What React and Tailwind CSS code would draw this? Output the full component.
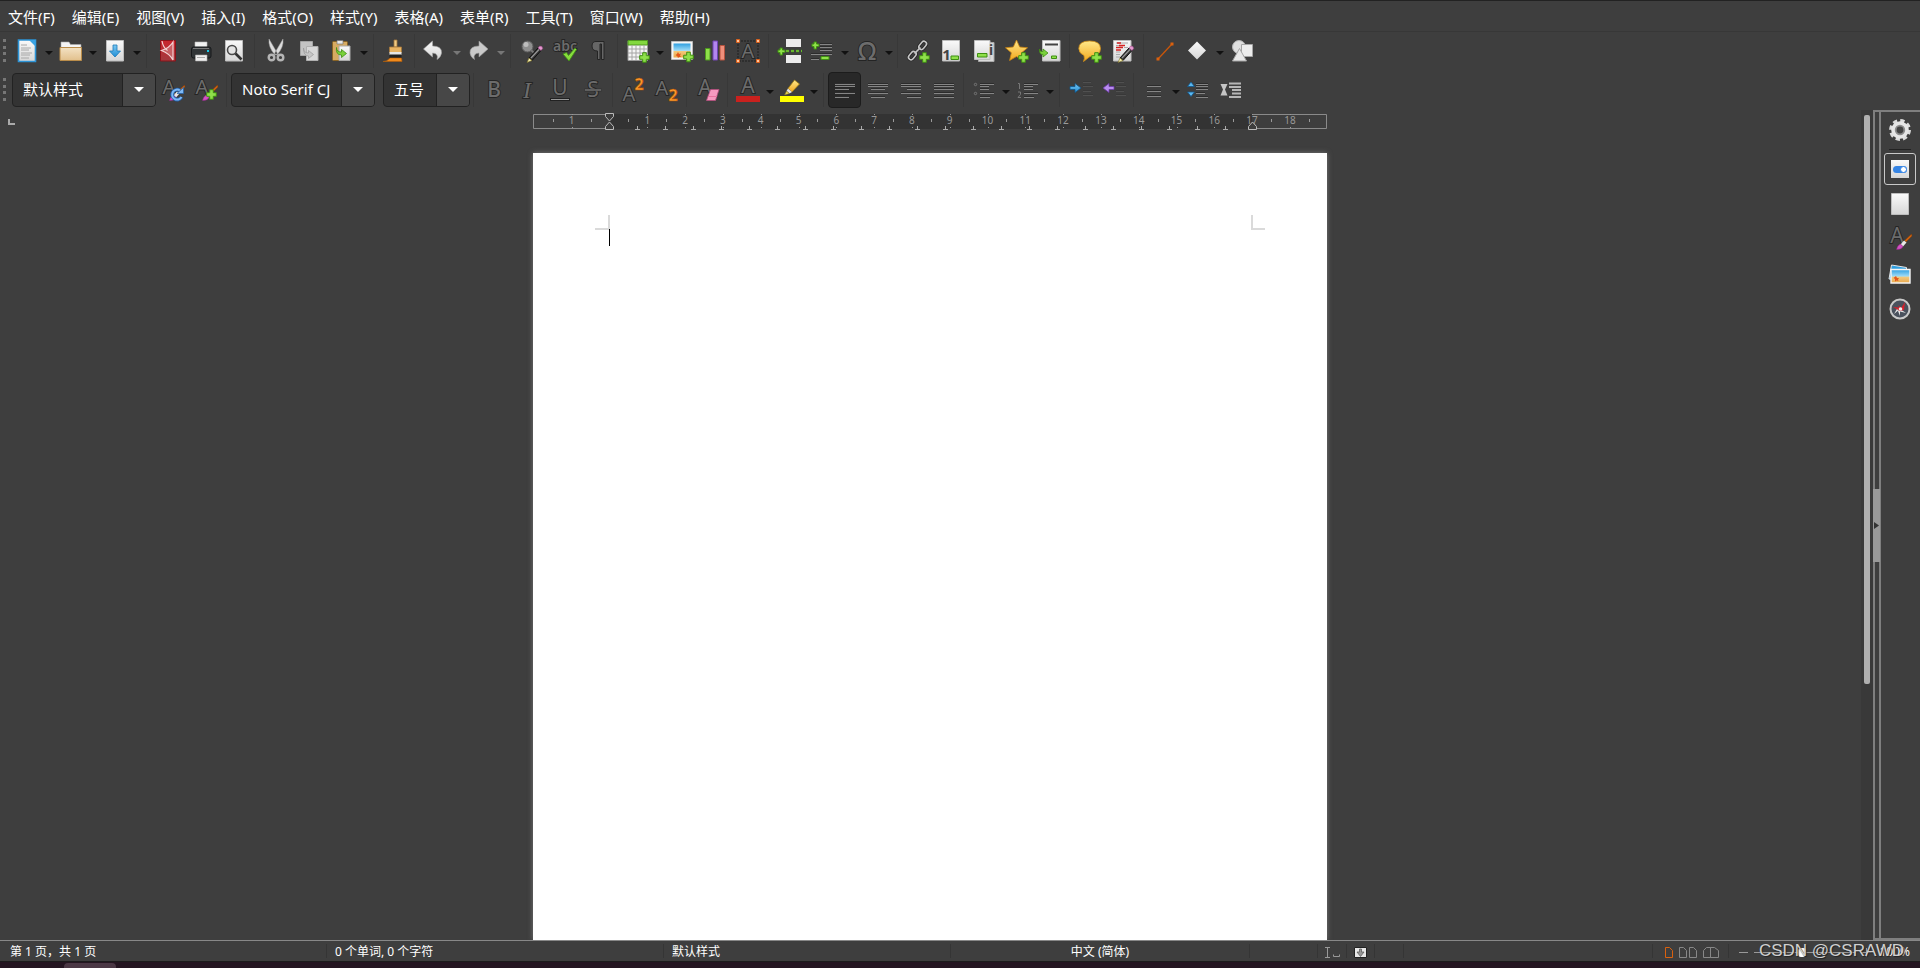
import React, { useState } from 'react';

const menus = ['文件(F)', '编辑(E)', '视图(V)', '插入(I)', '格式(O)', '样式(Y)', '表格(A)', '表单(R)', '工具(T)', '窗口(W)', '帮助(H)'];

// Gradients shared by all the icons
const Gradients = () => (
  <svg className="absolute h-0 w-0" aria-hidden="true">
    <defs>
      <linearGradient id="paper" x1="0" y1="0" x2="0" y2="1">
        <stop offset="0" stopColor="#fafafa" />
        <stop offset="1" stopColor="#d6d6d6" />
      </linearGradient>
      <linearGradient id="folder" x1="0" y1="0" x2="0" y2="1">
        <stop offset="0" stopColor="#f3e2c4" />
        <stop offset="1" stopColor="#e2c08c" />
      </linearGradient>
      <linearGradient id="blue" x1="0" y1="0" x2="0" y2="1">
        <stop offset="0" stopColor="#7cc8f2" />
        <stop offset="1" stopColor="#1f8ed6" />
      </linearGradient>
      <linearGradient id="gold" x1="0" y1="0" x2="0" y2="1">
        <stop offset="0" stopColor="#ffe88a" />
        <stop offset="1" stopColor="#f2a81d" />
      </linearGradient>
      <linearGradient id="red" x1="0" y1="0" x2="0" y2="1">
        <stop offset="0" stopColor="#c9252d" />
        <stop offset="1" stopColor="#a33a3e" />
      </linearGradient>
      <linearGradient id="sky" x1="0" y1="0" x2="0" y2="1">
        <stop offset="0" stopColor="#2f9fe0" />
        <stop offset="0.5" stopColor="#9fdcf7" />
        <stop offset="0.55" stopColor="#f3c97c" />
        <stop offset="1" stopColor="#e9a94e" />
      </linearGradient>
    </defs>
  </svg>
);

const Svg = ({ children }) => (
  <svg viewBox="0 0 24 24" className="h-6 w-6 overflow-visible" aria-hidden="true">
    {children}
  </svg>
);

const Plus = ({ x = 13, y = 12 }) => (
  <path
    transform={`translate(${x} ${y})`}
    d="M3.7 .7h3.6v3h3v3.6h-3v3H3.7v-3h-3V3.7h3z"
    fill="#8fe04a"
    stroke="#3f8f12"
    strokeWidth="1"
  />
);

const Letter = ({ children, x = 12, y = 20, size = 23, weight = 400, italic = false }) => (
  <text
    x={x}
    y={y}
    fontSize={size}
    fontWeight={weight}
    textAnchor="middle"
    fontStyle={italic ? 'italic' : 'normal'}
    fontFamily={italic ? 'Liberation Serif, serif' : 'Noto Sans, sans-serif'}
    fill="#6c6c6c"
    stroke="#242424"
    strokeWidth="1.8"
    paintOrder="stroke"
  >
    {children}
  </text>
);

const Lines = ({ rows, color = '#858585', shade = '#2c2c2c' }) => (
  <g>
    {rows.map(([x, y, w]) => (
      <g key={y}>
        <rect x={x} y={y - 1} width={w} height="1" fill={shade} />
        <rect x={x} y={y} width={w} height="1" fill={color} />
      </g>
    ))}
  </g>
);

const Pencil = () => (
  <g>
    <path d="M9 19l9-10 3 2.500-9 10z" fill="#333" stroke="#111" strokeWidth="1" />
    <path d="M11 19l8-8.500" stroke="#999" strokeWidth="1.200" />
    <path d="M18 9l1.500-1.800q3-.5 3.200 2.300L21 11.500z" fill="#e59ad0" stroke="#a14d8c" strokeWidth=".6" />
    <path d="M9 19l3 2.500-5 2z" fill="#f7efaf" stroke="#776b22" strokeWidth=".6" />
  </g>
);

const Brush = () => (
  <g>
    <path d="M23.500 7l-7 6.500 1.500 1.500 6-6z" fill="#d0620f" stroke="#7a3705" strokeWidth=".4" />
    <path d="M16 13.500l-3.500 4 2.500 2 3.500-4z" fill="#e8e8e8" />
    <path d="M12.500 17q-3 1-4 5.500 5 .5 6.500-3z" fill="#d352c4" stroke="#8d2383" strokeWidth=".5" />
  </g>
);

const icons = {
  new: (
    <Svg>
      <path d="M3.500 1h17v21.500h-17z" fill="url(#paper)" stroke="#2d94d6" strokeWidth="1.600" />
      <path d="M14 1h6.500v6.500z" fill="#3aa3e3" />
      <path d="M6 6h6M6 9h10M6 11h8M6 14h11M6 16h9M6 19h8" stroke="#a8a8a8" strokeWidth="1" />
    </Svg>
  ),
  open: (
    <Svg>
      <path d="M2 3h8l1.500 2.500H22V12H2z" fill="#f5f5f5" stroke="#aaa" strokeWidth=".6" />
      <path d="M1 8.500h21.500V21.500H1z" fill="url(#folder)" stroke="#b98c4a" strokeWidth="1" />
    </Svg>
  ),
  save: (
    <Svg>
      <path d="M3.500 1.500h17v20.500h-17z" fill="url(#paper)" stroke="#bdbdbd" />
      <path d="M10 6h4v6h3.500L12 18l-5.500-6H10z" fill="url(#blue)" stroke="#1c78b8" strokeWidth=".8" />
    </Svg>
  ),
  pdf: (
    <Svg>
      <path d="M4.500 1.500h15v20.500h-15z" fill="url(#red)" stroke="#8c1219" />
      <path d="M17 3v18Q13.500 14.500 5.500 11.500 13.500 9 17 3z" fill="#d98a8d" fillOpacity=".55" stroke="#f3d3d4" strokeWidth="1.200" />
      <path d="M6 2q1 6.500 5.500 9.500" fill="none" stroke="#f3d3d4" strokeWidth="1.200" />
    </Svg>
  ),
  print: (
    <Svg>
      <path d="M6 3h12v6H6z" fill="#f2f2f2" stroke="#bbb" strokeWidth=".6" />
      <rect x="2.500" y="8" width="19.500" height="11" rx="2" fill="#303436" stroke="#16181a" />
      <path d="M4 9.500h16" stroke="#777" />
      <rect x="18" y="11" width="2" height="2" fill="#19c8e8" />
      <path d="M6.500 16h11.500v6H6.500z" fill="#eee" stroke="#aaa" strokeWidth=".6" />
      <path d="M8 18.500h8" stroke="#aaa" />
    </Svg>
  ),
  preview: (
    <Svg>
      <path d="M3.500 1.500h17v20.500h-17z" fill="url(#paper)" stroke="#bdbdbd" />
      <circle cx="10" cy="11" r="4.500" fill="#e4e4e4" stroke="#4a4a4a" strokeWidth="1.600" />
      <path d="M13.500 14.500l6 6" stroke="#333" strokeWidth="2.600" />
    </Svg>
  ),
  cut: (
    <Svg>
      <path d="M5 0l8.500 14.500-2.500 1.500Q4 8 5 0zM19 0l-8.500 14.500 2.500 1.500Q20 8 19 0z" fill="#dcdcdc" stroke="#a5a5a5" strokeWidth=".5" />
      <circle cx="7.500" cy="18.500" r="2.800" fill="none" stroke="#b5b5b5" strokeWidth="2.400" />
      <circle cx="16.500" cy="18.500" r="2.800" fill="none" stroke="#b5b5b5" strokeWidth="2.400" />
    </Svg>
  ),
  copy: (
    <Svg>
      <path d="M3.500 2.500h12v14h-12z" fill="#c4c4c4" stroke="#a5a5a5" />
      <path d="M9.500 7.500h11.500v14H9.500z" fill="#d8d8d8" stroke="#b0b0b0" />
      <path d="M6.500 9q0 5 5 5v-2.500l5 4-5 4V17q-5 0-5-8z" fill="#c6c6c6" stroke="#999" strokeWidth=".7" />
    </Svg>
  ),
  paste: (
    <Svg>
      <rect x="2.500" y="2.500" width="15" height="19" rx="1" fill="#d7ab62" stroke="#8a6424" />
      <path d="M7 1.500h6V5H7z" fill="#e8e8e8" stroke="#777" strokeWidth=".7" />
      <path d="M9 7h11v14.500H9z" fill="url(#paper)" stroke="#aaa" />
      <path d="M6.500 8.500q0 4.500 5 4.500v-2.500l5 4-5 4V16q-6 0-5-7.500z" fill="#7ad13b" stroke="#3f8f12" strokeWidth=".8" />
    </Svg>
  ),
  clone: (
    <Svg>
      <path d="M11 1h3v7h-3z" fill="#f0cb84" stroke="#a4763a" strokeWidth=".8" />
      <path d="M6.500 8h12v5.500h-12z" fill="#e9b463" stroke="#a4763a" strokeWidth=".8" />
      <path d="M6.500 13h12v3h-12z" fill="#e6e6e6" />
      <path d="M6.500 15.500h12V20h-12z" fill="#222" />
      <path d="M7 19l11.500 0 .5 3.500H0q4 0 7-3.500z" fill="#f08a1c" stroke="#b25c08" strokeWidth=".6" />
    </Svg>
  ),
  undo: (
    <Svg>
      <path d="M9.500 2v5q9.500 0 9 7-.5 4-4.500 6.500 2-6-4.500-6.500v4L.5 10z" fill="url(#paper)" stroke="#aaa" strokeWidth=".6" />
    </Svg>
  ),
  redo: (
    <Svg>
      <path d="M12 2v5q-9.500 0-9 7 .5 4 4.500 6.500-2-6 4.500-6.500v4l9-8z" fill="#c9c9c9" stroke="#999" strokeWidth=".6" />
    </Svg>
  ),
  find: (
    <Svg>
      <circle cx="7.500" cy="7.500" r="5.500" fill="#8f8f8f" stroke="#5d5d5d" />
      <circle cx="6" cy="5.500" r="2.500" fill="#bdbdbd" />
      <path d="M11 11l4 4" stroke="#777" strokeWidth="2" />
      <Pencil />
    </Svg>
  ),
  spell: (
    <Svg>
      <Letter size={14} y={12} weight={600}>abc</Letter>
      <path d="M10 15l3.500-1.500 2 3L22 9l1.500 1.500L16 22z" fill="#86dc3d" stroke="#3f8f12" strokeWidth=".8" />
    </Svg>
  ),
  pilcrow: (
    <Svg>
      <path d="M18 2.500v18h-2.500V5h-1.500V20.500h-2.500v-8.500Q6 12 6 7T11 2.500z" fill="#666" stroke="#242424" strokeWidth="1" />
    </Svg>
  ),
  table: (
    <Svg>
      <path d="M2 2h19.500v19.500H2z" fill="#f5f5f5" stroke="#999" />
      <path d="M2 1.500h19.500V6H2z" fill="#83d83f" stroke="#4f9a1e" />
      <path d="M2 10h19.500M2 14h19.500M2 18h19.500M6 6v15M10 6v15M14 6v15M18 6v15" stroke="#a5a5a5" />
      <Plus x={13} y={13} />
    </Svg>
  ),
  image: (
    <Svg>
      <path d="M1.500 2.500h21v18h-21z" fill="#f5f5f5" stroke="#bbb" />
      <path d="M3.500 4.500h17v14h-17z" fill="url(#sky)" />
      <path d="M8 13l1 2 2-.5-1 2 1 1.500H9l-1 1-.5-1.500L5.500 16l1.500-1z" fill="#e2561a" />
      <Plus x={13} y={12.5} />
    </Svg>
  ),
  chart: (
    <Svg>
      <path d="M2.500 9.500h4.500V21H2.500z" fill="#8fe04a" stroke="#4f9a1e" />
      <path d="M10 2h4.500V21H10z" fill="#b287ee" stroke="#7244b5" />
      <path d="M17 6.500h4.500V21H17z" fill="#ef8f7b" stroke="#b5533f" />
    </Svg>
  ),
  textbox: (
    <Svg>
      <path d="M2 2h20v20H2z" fill="none" stroke="#1f1f1f" strokeDasharray="2 1" />
      <Letter y={19} size={20}>A</Letter>
      <path d="M.5.5h3v3h-3zM20.500.5h3v3h-3zM.5 20.500h3v3h-3zM20.500 20.500h3v3h-3z" fill="#ffc39b" stroke="#d9611c" />
    </Svg>
  ),
  pageBreak: (
    <Svg>
      <path d="M8 0h15v8H8zM8 16h15v8H8z" fill="#ececec" />
      <path d="M8 12h16" stroke="#3f8f12" strokeWidth="2.600" strokeDasharray="3 2" />
      <path d="M8 12h16" stroke="#8fe04a" strokeWidth="1.200" strokeDasharray="3 2" />
      <path d="M2 9h2.500v2H7v2.500H4.500V16H2v-2.500H0V11h2z" fill="#8fe04a" stroke="#3f8f12" />
    </Svg>
  ),
  field: (
    <Svg>
      <Lines rows={[[9, 5, 12], [9, 8, 12], [9, 11, 12], [0, 15, 21], [0, 20, 8]]} />
      <path d="M3 3h2.500v2H8v2.500H5.500V10H3V7.500H1V5h2z" fill="#8fe04a" stroke="#3f8f12" />
      <path d="M10 17.500h8v3h-8z" fill="#8fe04a" stroke="#3f8f12" />
    </Svg>
  ),
  omega: <Svg><Letter size={25} y={21} weight={500}>Ω</Letter></Svg>,
  link: (
    <Svg>
      <g fill="none" stroke="#222" strokeWidth="3.200">
        <rect x="-5" y="-2.600" width="9" height="5.200" rx="2.600" transform="translate(17 6) rotate(-50)" />
        <rect x="-4" y="-2.600" width="9" height="5.200" rx="2.600" transform="translate(6 17) rotate(-50)" />
      </g>
      <g fill="none" stroke="#c5c5c5" strokeWidth="1.600">
        <rect x="-5" y="-2.600" width="9" height="5.200" rx="2.600" transform="translate(17 6) rotate(-50)" />
        <rect x="-4" y="-2.600" width="9" height="5.200" rx="2.600" transform="translate(6 17) rotate(-50)" />
        <path d="M8.500 14.500l6-6" />
      </g>
      <Plus x={13} y={13} />
    </Svg>
  ),
  footnote: (
    <Svg>
      <path d="M3.500 1.500h17v20.500h-17z" fill="url(#paper)" stroke="#bdbdbd" />
      <text x="7.500" y="21" textAnchor="middle" fontSize="15" fontWeight="700" fontFamily="Noto Sans, sans-serif" fill="#444">1</text>
      <path d="M12 17h7.500v3.500H12z" fill="#8fe04a" stroke="#3f8f12" />
    </Svg>
  ),
  endnote: (
    <Svg>
      <path d="M6.500 3.500h15.500v19H6.500z" fill="#dadada" stroke="#aaa" />
      <path d="M2.500 1.500H18v19H2.500z" fill="url(#paper)" stroke="#bdbdbd" />
      <text x="19" y="16" textAnchor="middle" fontSize="14" fontWeight="700" fontFamily="Noto Sans, sans-serif" fill="#444">i</text>
      <path d="M5.500 14.500H15V18H5.500z" fill="#8fe04a" stroke="#3f8f12" />
    </Svg>
  ),
  bookmark: (
    <Svg>
      <path d="M11.500 1l3.200 7 7.800.8-5.900 5 1.800 7.700-6.900-4-6.900 4 1.800-7.700-5.900-5 7.800-.8z" fill="url(#gold)" stroke="#c98412" strokeWidth=".8" />
      <Plus x={13} y={13} />
    </Svg>
  ),
  crossRef: (
    <Svg>
      <path d="M4.500 1.500h17.500v20.500H4.500z" fill="url(#paper)" stroke="#bdbdbd" />
      <path d="M7 5.500h13" stroke="#444" strokeWidth="2" />
      <path d="M1.500 10q0 3 3.500 2.500V10l5 4-5 4v-2.500q-4 0-3.500-5.500z" fill="#7ad13b" stroke="#3f8f12" strokeWidth=".8" />
      <path d="M13.500 17h5V19.500h-5z" fill="#8fe04a" stroke="#3f8f12" />
    </Svg>
  ),
  comment: (
    <Svg>
      <path d="M11.500 2q11 0 11 7.500T12 17.500l-6.500 5q1.500-3 .5-6Q.800 14 .800 9.500.800 2 11.500 2z" fill="url(#gold)" stroke="#d39017" strokeWidth=".8" />
      <Plus x={13} y={13} />
    </Svg>
  ),
  track: (
    <Svg>
      <path d="M2.500 1.500H20v20.500H2.500z" fill="url(#paper)" stroke="#bdbdbd" />
      <path d="M5 4h12M5 6.500h3M13 8.500h4M5 13h4M5 15.500h4M5 18h4" stroke="#aaa" />
      <path d="M6 4h4M8 6.500h6M5 8.500h7M5 11h5" stroke="#d42222" strokeWidth="1.400" />
      <Pencil />
    </Svg>
  ),
  line: (
    <Svg>
      <path d="M5 20L19 5" stroke="#c9560a" strokeWidth="1.300" />
      <path d="M3.500 18.500h3v3h-3zM17.500 3.500h3v3h-3z" fill="#d9610f" />
    </Svg>
  ),
  diamond: (
    <Svg>
      <path d="M11 2.500l9 9-9 9-9-9z" fill="url(#paper)" />
    </Svg>
  ),
  shapes: (
    <Svg>
      <circle cx="9" cy="8" r="6.500" fill="#dedede" stroke="#b3b3b3" />
      <path d="M11.500 5.500H22.500v12H11.500z" fill="#ededed" stroke="#a5a5a5" />
      <path d="M9.500 9.500l7 12.500h-14z" fill="#e8e8e8" stroke="#a5a5a5" />
    </Svg>
  ),
  updateStyle: (
    <Svg>
      <Letter x={8} y={16} size={20}>A</Letter>
      <Brush />
      <path d="M20.500 19a5 5 0 1 1-1.500-6.500" fill="none" stroke="#215ea8" strokeWidth="3.600" />
      <path d="M20.500 19a5 5 0 1 1-1.500-6.500" fill="none" stroke="#7db8f5" strokeWidth="2" />
      <path d="M16 15.500h6.500V9.500z" fill="#7db8f5" stroke="#215ea8" strokeWidth=".7" />
    </Svg>
  ),
  newStyle: (
    <Svg>
      <Letter x={8} y={16} size={20}>A</Letter>
      <Brush />
      <Plus x={12} y={11} />
    </Svg>
  ),
  bold: <Svg><Letter size={21} y={19} weight={500}>B</Letter></Svg>,
  italic: <Svg><Letter size={24} y={20} italic>I</Letter></Svg>,
  underline: (
    <Svg>
      <Letter size={21} y={17}>U</Letter>
      <path d="M2 20h20v3H2z" fill="#222" />
      <path d="M3 21.500h18" stroke="#999" />
    </Svg>
  ),
  strike: (
    <Svg>
      <Letter size={21} y={19}>S</Letter>
      <path d="M3.500 11h17v2h-17z" fill="#777" stroke="#2a2a2a" strokeWidth=".6" />
    </Svg>
  ),
  superscript: (
    <Svg>
      <Letter x={8} y={23} size={20}>A</Letter>
      <text x="18" y="12" textAnchor="middle" fontSize="16" fontWeight="700" fontFamily="Noto Sans, sans-serif" fill="#ff9a2e" stroke="#a84f00" strokeWidth=".6">2</text>
    </Svg>
  ),
  subscript: (
    <Svg>
      <Letter x={8} y={17} size={20}>A</Letter>
      <text x="19" y="23" textAnchor="middle" fontSize="16" fontWeight="700" fontFamily="Noto Sans, sans-serif" fill="#ff9a2e" stroke="#a84f00" strokeWidth=".6">2</text>
    </Svg>
  ),
  clear: (
    <Svg>
      <Letter x={9} y={17} size={21}>A</Letter>
      <path d="M14.500 11.500h8.500l-3.500 11h-9z" fill="#f79ac0" stroke="#b44c7c" strokeWidth=".8" />
      <path d="M12 18.500h9" stroke="#e9739f" />
    </Svg>
  ),
  fontColor: (
    <Svg>
      <Letter y={15} size={21}>A</Letter>
      <path d="M0 18h24v6H0z" fill="#c9211e" />
    </Svg>
  ),
  highlight: (
    <Svg>
      <path d="M14.500 2l5 4-7.500 8-4-3.500z" fill="url(#gold)" stroke="#9c7a10" strokeWidth=".8" />
      <path d="M8 10.500l4 3.500-2.500 1.500L6.500 13z" fill="#e5e5e5" />
      <path d="M6.500 13l3 2.500-5 1.500z" fill="#e9d34c" stroke="#776b22" strokeWidth=".5" />
      <path d="M0 18h24v6H0z" fill="#ffff00" />
    </Svg>
  ),
  alignLeft: <Svg><Lines rows={[[2, 6, 20], [2, 8, 20], [2, 11, 14], [2, 15, 20], [2, 19, 14]]} /></Svg>,
  alignCenter: <Svg><Lines rows={[[2, 6, 20], [2, 8, 20], [5, 11, 14], [2, 15, 20], [5, 19, 14]]} /></Svg>,
  alignRight: <Svg><Lines rows={[[2, 6, 20], [2, 8, 20], [8, 11, 14], [2, 15, 20], [8, 19, 14]]} /></Svg>,
  justify: <Svg><Lines rows={[[2, 6, 20], [2, 8, 20], [2, 11, 20], [2, 15, 20], [2, 19, 20]]} /></Svg>,
  bullets: (
    <Svg>
      <Lines rows={[[8, 6, 14], [8, 8, 9], [8, 11, 9], [8, 15, 14], [8, 19, 10]]} />
      <circle cx="3.500" cy="6.500" r="1.200" fill="none" stroke="#777" />
      <circle cx="3.500" cy="15.500" r="1.200" fill="none" stroke="#777" />
    </Svg>
  ),
  numbering: (
    <Svg>
      <Lines rows={[[8, 6, 14], [8, 8, 9], [8, 11, 9], [8, 15, 14], [8, 19, 10]]} />
      <path d="M2 5.500h1.500v5.500M2 14h2.500v2.500L2 19.500h3" fill="none" stroke="#777" />
    </Svg>
  ),
  indent: (
    <Svg>
      <Lines rows={[[14, 4, 8], [14, 8, 10], [14, 13, 8], [14, 17, 10]]} color="#505050" shade="#383838" />
      <path d="M1 8.500h5v-3l6 4.500-6 4.500v-3H1z" fill="url(#blue)" stroke="#12578c" strokeWidth=".8" />
    </Svg>
  ),
  outdent: (
    <Svg>
      <Lines rows={[[14, 4, 8], [14, 8, 10], [14, 13, 8], [14, 17, 10]]} color="#505050" shade="#383838" />
      <path d="M12 8.500H7v-3L1 10l6 4.500v-3h5z" fill="#b98df0" stroke="#6c3aa8" strokeWidth=".8" />
    </Svg>
  ),
  lineSpacing: <Svg><Lines rows={[[5, 8, 14], [5, 13, 14], [5, 18, 14]]} /></Svg>,
  spaceUp: (
    <Svg>
      <Lines rows={[[10, 6, 12], [10, 8, 12], [10, 11, 12], [10, 15, 9], [10, 19, 12]]} />
      <path d="M5 4l3.500 4.500h-7zM5 18.500L1.500 14h7z" fill="#5bb8f0" stroke="#12578c" strokeWidth=".8" />
    </Svg>
  ),
  spaceDown: (
    <Svg>
      <path d="M10 5.500h12M10 9h12M13 12h9M13 15.500h9M10 19h12" stroke="#b5b5b5" strokeWidth="1.800" />
      <path d="M1.500 6h7L6 11.500 8.500 17.500h-7L4 11.500z" fill="#c5c5c5" />
    </Svg>
  ),
  settings: (
    <Svg>
      <circle cx="12" cy="12" r="9.200" fill="none" stroke="#dcdcdc" strokeWidth="3.500" strokeDasharray="4.200 3.020" />
      <circle cx="12" cy="12" r="6.300" fill="#666" stroke="#e6e6e6" strokeWidth="5" />
      <circle cx="12" cy="12" r="4.300" fill="#444" stroke="#8c8c8c" strokeWidth="1.800" />
    </Svg>
  ),
  properties: (
    <Svg>
      <path d="M3 3h18v18H3z" fill="url(#paper)" />
      <rect x="5" y="9" width="14" height="7" rx="3.500" fill="#3584e4" />
      <circle cx="15.500" cy="12.500" r="3" fill="#fff" stroke="#3584e4" />
    </Svg>
  ),
  page: (
    <Svg>
      <path d="M3.500 1.500h17v21h-17z" fill="url(#paper)" stroke="#bdbdbd" />
    </Svg>
  ),
  styles: (
    <Svg>
      <Letter x={9} y={16} size={21}>A</Letter>
      <Brush />
    </Svg>
  ),
  gallery: (
    <Svg>
      <path d="M3.500 3l15 2.500V18L1 17z" fill="#2f9fe0" stroke="#e5e5e5" strokeWidth="1" />
      <path d="M3 7.500h19v13.500H3z" fill="url(#sky)" stroke="#f5f5f5" strokeWidth="1.400" />
      <path d="M8 14l1 2 2 0-1 1.500.5 1.500-2-.5-1.500 1V17l-1.500-1z" fill="#e2561a" />
    </Svg>
  ),
  navigator: (
    <Svg>
      <circle cx="12" cy="12" r="9.500" fill="#4a515d" stroke="#c9c9c9" strokeWidth="2" />
      <path d="M12 12L6 17l3.500-6zM12 12l6 4-6-1.500zM12 12v7l-2-5z" fill="#e6e6e6" />
      <path d="M10.500 8l2.500 3 4-6-1 8-4 1-7-4 6 .5z" fill="#d6202b" />
      <circle cx="12.500" cy="12" r="1.800" fill="#f0f0f0" />
    </Svg>
  ),
};

// '|' is a separator, '||' a wider one; 'name+' has a drop-down arrow
const standardBar = [
  ['new+', '新建'], ['open+', '打开'], ['save+', '保存'], '||',
  ['pdf', '导出为 PDF'], ['print', '打印'], ['preview', '打印预览'], '||',
  ['cut', '剪切'], ['copy', '复制'], ['paste+', '粘贴'], '||',
  ['clone', '克隆格式'], '|',
  ['undo+', '撤销', true], ['redo+', '重做', true], '||',
  ['find', '查找与替换'], ['spell', '拼写检查'], ['pilcrow', '格式标记'], '|',
  ['table+', '插入表格'], ['image', '插入图片'], ['chart', '插入图表'], ['textbox', '插入文本框'], '||',
  ['pageBreak', '插入分页符'], ['field+', '插入字段'], ['omega+', '特殊字符'], '|',
  ['link', '超链接'], ['footnote', '脚注'], ['endnote', '尾注'], ['bookmark', '书签'], ['crossRef', '交叉引用'], '|',
  ['comment', '批注'], ['track', '修订'], '||',
  ['line', '直线'], ['diamond+', '形状'], ['shapes', '绘图功能'],
];

const formatBar = [
  ['bold', '粗体'], ['italic', '斜体'], ['underline', '下划线'], ['strike', '删除线'], '|',
  ['superscript', '上标'], ['subscript', '下标'], '||',
  ['clear', '清除格式'], '|',
  ['fontColor+', '字体颜色'], ['highlight+', '突出显示'], '||',
  ['alignLeft', '左对齐'], ['alignCenter', '居中'], ['alignRight', '右对齐'], ['justify', '两端对齐'], '|',
  ['bullets+', '项目符号'], ['numbering+', '编号'], '||',
  ['indent', '增加缩进'], ['outdent', '减少缩进'], '|',
  ['lineSpacing+', '行距'], ['spaceUp', '增加段间距'], ['spaceDown', '减少段间距'],
];

const sideTabs = [
  ['properties', '属性'], ['page', '页面'], ['styles', '样式'], ['gallery', '图库'], ['navigator', '导航'],
];

const Grip = () => <div className="ml-[3px] mr-1 h-[23px] border-l-[3px] border-dotted border-[#777]" />;

const Separator = ({ wide }) => (
  <div className={`flex h-[34px] shrink-0 justify-center ${wide ? 'w-[9px]' : 'w-[7px]'}`}>
    <div className="w-px bg-[#383838]" />
  </div>
);

const Tool = ({ name, label, dim, active, onClick }) => {
  const split = name.endsWith('+');
  const id = name.replace('+', '');
  return (
    <>
      <button
        type="button"
        aria-label={label}
        onClick={onClick}
        className={`flex h-9 w-[33px] shrink-0 items-center justify-center rounded-[4px] border ${
          active ? 'border-[#1c1c1c] bg-[#282828]' : 'border-transparent hover:bg-[#4a4a4a]'
        }`}
      >
        {icons[id]}
      </button>
      {split && (
        <button type="button" aria-label={`${label}选项`} className="flex h-9 w-[11px] shrink-0 items-center justify-center pt-1">
          <svg viewBox="0 0 8 4" className="h-1 w-2">
            <path d="M0 0h8L4 4z" fill={dim ? '#777' : '#111'} />
          </svg>
        </button>
      )}
    </>
  );
};

const ToolGroup = ({ items, active, onSelect }) =>
  items.map((item, i) =>
    typeof item === 'string' ? (
      <Separator key={i} wide={item === '||'} />
    ) : (
      <Tool
        key={item[0]}
        name={item[0]}
        label={item[1]}
        dim={item[2]}
        active={active === item[0]}
        onClick={onSelect ? () => onSelect(item[0]) : undefined}
      />
    )
  );

const Combo = ({ label, options, width }) => (
  <div className={`relative h-[34px] shrink-0 ${width}`}>
    <select
      aria-label={label}
      className="h-full w-full appearance-none rounded-[4px] border border-[#222] bg-[#333] pl-2.5 text-[15px] text-white outline-none"
    >
      {options.map((o) => (
        <option key={o}>{o}</option>
      ))}
    </select>
    <div className="pointer-events-none absolute inset-y-px right-px flex w-[33px] items-center justify-center rounded-r-[3px] border-l border-[#222] bg-[#474747]">
      <svg viewBox="0 0 10 5" className="h-[5px] w-2.5">
        <path d="M0 0h10L5 5z" fill="#fff" />
      </svg>
    </div>
  </div>
);

const CM = 37.8;

const Ruler = () => {
  const zero = 76.5;
  const labels = [-1, ...Array.from({ length: 18 }, (_, i) => i + 1)];
  const halves = Array.from({ length: 21 }, (_, i) => i - 1.5).filter((n) => n < 19);
  const tabs = Array.from({ length: 22 }, (_, i) => zero + (i + 1) * 28);
  return (
    <svg viewBox="0 0 794 17" className="h-[17px] w-[794px] overflow-visible" aria-hidden="true">
      <path d="M77 0h642v15H77z" fill="#333" />
      <path d="M77 .5H.5v14H77M719 .5h74.500v14H719" fill="none" stroke="#8a8a8a" />
      {halves.map((n) => (
        <rect key={n} x={Math.round(zero + n * CM)} y="5" width="1" height="3" fill="#999" />
      ))}
      {labels.map((n) => (
        <g key={n}>
          <text x={zero + n * CM} y="10" textAnchor="middle" fontSize="10" fontFamily="Noto Sans, sans-serif" fill="#999">
            {Math.abs(n)}
          </text>
          <rect x={Math.round(zero + n * CM)} y="13" width="1" height="1" fill="#999" />
          <rect x={Math.round(zero + n * CM)} y="0" width="1" height="1" fill="#999" />
        </g>
      ))}
      {tabs.map((x) => (
        <path key={x} d={`M${x} 12v3M${x - 2.5} 15.500h5`} stroke="#aaa" fill="none" />
      ))}
      <g fill="#3d3d3d" stroke="#bbb">
        <path d="M72.500 -.5h8v3l-4 4.500-4-4.500z" />
        <path d="M72.500 15.500h8v-3l-4-4.500-4 4.500z" />
        <path d="M715.500 15.500h8v-3l-4-4.500-4 4.500z" />
      </g>
    </svg>
  );
};

const StatusCell = ({ children, className = '' }) => (
  <div className={`my-[3px] flex items-center border-r border-[#353535] pt-0.5 ${className}`}>{children}</div>
);

const App = () => {
  const [align, setAlign] = useState('alignLeft');
  const [tab, setTab] = useState('properties');
  const [zoom, setZoom] = useState(47);

  const selectFormat = (name) => {
    if (name.startsWith('align') || name === 'justify') setAlign(name);
  };

  return (
    <div className="flex h-screen flex-col overflow-hidden border-t border-[#222] bg-[#3e3e3e] font-['Noto_Sans','Noto_Sans_CJK_SC',sans-serif] text-white">
      <Gradients />

      <nav className="flex h-[31px] shrink-0 items-center gap-[17px] border-b border-[#373737] px-2 pt-[3px] text-[15px]">
        {menus.map((m) => (
          <button key={m} type="button" className="whitespace-nowrap">
            {m}
          </button>
        ))}
      </nav>

      {/* Standard toolbar */}
      <div className="flex h-[39px] shrink-0 items-center pb-0.5">
        <Grip />
        <ToolGroup items={standardBar} />
      </div>

      {/* Formatting toolbar */}
      <div className="flex h-[39px] shrink-0 items-center pb-0.5">
        <Grip />
        <div className="w-0.5" />
        <Combo label="段落样式" options={['默认样式', '标题 1', '标题 2']} width="w-36" />
        <Tool name="updateStyle" label="更新样式" />
        <Tool name="newStyle" label="新建样式" />
        <Separator wide />
        <Combo label="字体名称" options={['Noto Serif CJ', 'Noto Sans']} width="w-36" />
        <div className="w-2" />
        <Combo label="字号" options={['五号', '小四', '四号']} width="w-[87px]" />
        <Separator />
        <ToolGroup items={formatBar} active={align} onSelect={selectFormat} />
      </div>

      <main className="flex min-h-0 flex-1">
        {/* Editor */}
        <div className="flex min-w-0 flex-1 flex-col pr-px pt-1">
          <div className="grid grid-cols-[1fr_auto_1fr]">
            <div className="ml-2 mt-[5px] h-1.5 w-[7px] border-b-2 border-l-2 border-[#aaa]" />
            <Ruler />
            <div />
          </div>
          <div className="flex min-h-0 flex-1 justify-center overflow-hidden pt-[22px]">
            <div className="relative flex w-[794px] flex-col bg-white shadow-[0_0_5px_#777]">
              <div className="flex justify-between px-[62px] pt-[62px]">
                <div className="h-[15px] w-[15px] border-b-2 border-r-2 border-[#dadada]" />
                <div className="h-[15px] w-[14px] border-b-2 border-l-2 border-[#dadada]" />
              </div>
              <textarea aria-label="文档正文" className="mx-[76px] flex-1 resize-none bg-transparent text-[14px] text-black outline-none" />
              <div className="absolute left-[76px] top-[76px] h-[17px] w-px bg-black" />
            </div>
          </div>
        </div>

        {/* Vertical scrollbar */}
        <div className="flex w-3 justify-center bg-[#393939] pt-[5px]">
          <div className="h-[69%] w-1.5 rounded-[2px] bg-[#afafaf]" />
        </div>

        {/* Sidebar deck */}
        <aside className="flex border-y-2 border-[#7f7f7f]">
          <div className="relative flex w-2 items-center border-x-2 border-[#7f7f7f]">
            <button type="button" aria-label="隐藏侧边栏" className="absolute -left-0.5 flex h-[73px] w-[7px] items-center justify-center bg-[#999]">
              <svg viewBox="0 0 5 7" className="h-[7px] w-[5px]">
                <path d="M0 0l5 3.500L0 7z" fill="#333" />
              </svg>
            </button>
          </div>
          <div className="flex w-[39px] flex-col items-center gap-[3px] pr-0.5 pt-0.5">
            <button type="button" aria-label="侧边栏设置" className="flex h-8 w-8 items-center justify-center">
              {icons.settings}
            </button>
            <div className="h-px w-[22px] bg-[#222]" />
            {sideTabs.map(([id, label]) => (
              <button
                key={id}
                type="button"
                aria-label={label}
                onClick={() => setTab(id)}
                className={`flex h-8 w-8 items-center justify-center rounded-[3px] border ${
                  tab === id ? 'border-[#c8c8c8]' : 'border-transparent'
                }`}
              >
                {icons[id]}
              </button>
            ))}
          </div>
        </aside>
      </main>

      {/* Status bar */}
      <footer className="relative grid h-[22px] shrink-0 grid-cols-[327fr_337fr_287fr_299fr_68fr_29px_28px_29px_249fr_76px_191px] border-b border-t border-b-[#1c1c1c] border-t-[#888] text-[12px] leading-none">
        <StatusCell className="pl-2.5">第 1 页，共 1 页</StatusCell>
        <StatusCell className="pl-2">0 个单词, 0 个字符</StatusCell>
        <StatusCell className="pl-2">默认样式</StatusCell>
        <StatusCell className="justify-center">中文 (简体)</StatusCell>
        <StatusCell />
        <StatusCell className="justify-center">
          <svg viewBox="0 0 16 11" className="h-[11px] w-4">
            <path d="M1 .5h5M1 10.500h5M3.500 .5v10M9.500 7.500v2h6v-2" fill="none" stroke="#999" />
          </svg>
        </StatusCell>
        <StatusCell className="justify-center">
          <svg viewBox="0 0 13 11" className="h-[11px] w-[13px]">
            <path d="M.5.5h12v10H.5z" fill="#e8e8e8" stroke="#222" />
            <path d="M5.500 2h2v3H10L6.500 9.500 3 5h2.500z" fill="#999" stroke="#555" strokeWidth=".7" />
          </svg>
        </StatusCell>
        <StatusCell />
        <StatusCell />
        <StatusCell className="justify-center pl-0.5">
          <svg viewBox="0 0 56 11" className="h-[11px] w-14">
            <path d="M1.500.5h4l3 3v7h-7z" fill="none" stroke="#d9610f" />
            <path d="M15.500.5h4l3 3v7h-7zM25.500.5h4l3 3v7h-7zM39.500 3.500l3-3h4v10h-7zM46.500.5h4l4 3v7h-8z" fill="none" stroke="#888" />
          </svg>
        </StatusCell>
        <div className="flex items-center pl-2.5 pt-0.5">
          <button type="button" aria-label="缩小" className="h-px w-[9px] bg-[#999]" />
          <input
            type="range"
            aria-label="显示比例"
            value={zoom}
            onChange={(e) => setZoom(Number(e.target.value))}
            className="ml-[6px] h-px w-[102px] appearance-none bg-[#999] [&::-webkit-slider-thumb]:h-[9px] [&::-webkit-slider-thumb]:w-2 [&::-webkit-slider-thumb]:appearance-none [&::-webkit-slider-thumb]:rounded-[3px] [&::-webkit-slider-thumb]:bg-white"
          />
          <button type="button" aria-label="放大" className="relative ml-[6px] h-[9px] w-[9px]">
            <svg viewBox="0 0 9 9" className="h-[9px] w-[9px]">
              <path d="M0 4.500h9M4.500 0v9" stroke="#999" />
            </svg>
          </button>
          <span className="ml-auto mr-2.5">100%</span>
        </div>
        <span className="absolute right-4 top-0 whitespace-nowrap font-['Liberation_Sans',sans-serif] text-[17px] leading-5 text-[#d0d0d0] [text-shadow:1px_1px_1px_#222]">
          CSDN @CSRAWD
        </span>
      </footer>

      {/* Desktop panel edge */}
      <div className="h-1.5 shrink-0 bg-[#241521] pl-16 pt-px">
        <div className="h-full w-[52px] rounded-t-[4px] bg-[#4b3845]" />
      </div>
    </div>
  );
};

export default App;
